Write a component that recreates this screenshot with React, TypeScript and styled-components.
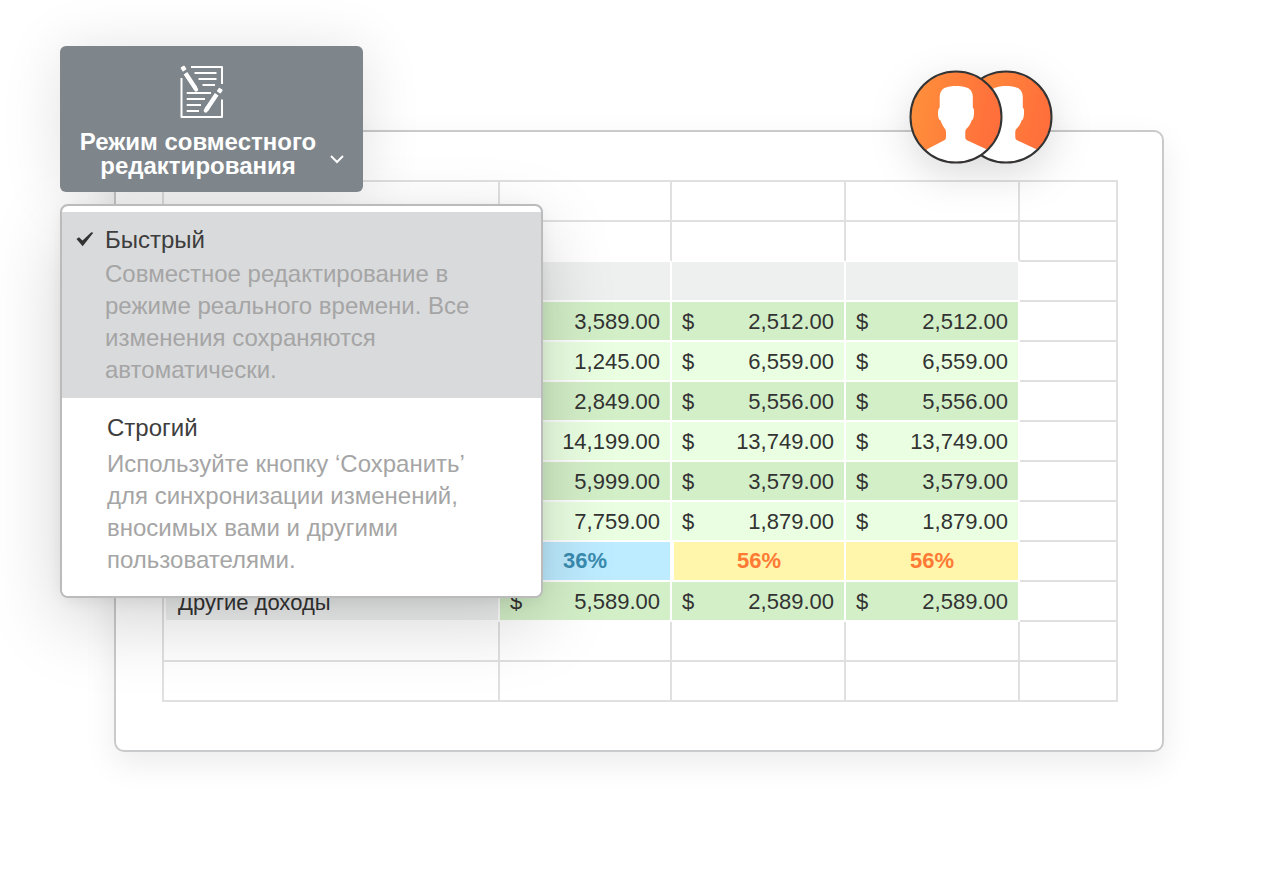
import React from "react";
import styled, { createGlobalStyle, css } from "styled-components";

const GlobalStyle = createGlobalStyle`
  *, *::before, *::after { box-sizing: border-box; }
  body {
    margin: 0;
    background: #fff;
    color: #333;
    font-family: "Liberation Sans", Arial, sans-serif;
  }
  button { font: inherit; color: inherit; cursor: pointer; }
`;

const Page = styled.main`
  position: relative;
  min-height: 100vh;
  overflow: hidden;
  padding: 130px 116px 128px 114px;
`;

const Card = styled.section`
  position: relative;
  padding: 48px 44px 48px 46px;
  border: 2px solid #c9cacb;
  border-radius: 10px;
  background: #fff;
  box-shadow: 0 12px 32px rgba(0, 0, 0, 0.08);
`;

const Sheet = styled.table`
  width: 100%;
  table-layout: fixed;
  border-collapse: separate;
  border-spacing: 0;
  border: 0 solid #e0e0e0;
  border-width: 2px 0 0 2px;
  font-size: 22px;
  line-height: 24px;
`;

const Column = styled.col<{ $width?: number }>`
  width: ${(p) => (p.$width ? `${p.$width}px` : "auto")};
`;

type Tone = "plain" | "head" | "green" | "mint" | "blue" | "yellow" | "label";

const fills: Record<Tone, string> = {
  plain: "transparent",
  head: "#eeefef",
  label: "#eeefef",
  green: "#d3efc8",
  mint: "#eaffe2",
  blue: "#bdebff",
  yellow: "#fff5ab",
};

const Cell = styled.td<{ $tone: Tone; $openBottom?: boolean }>`
  height: 40px;
  padding: 2px 10px 0;
  border: 0 solid #e0e0e0;
  border-width: 0 2px 2px 0;
  background: ${(p) => fills[p.$tone]};
  background-clip: padding-box;
  ${(p) => p.$tone !== "plain" && css`border-color: #fff;`}
  ${(p) => p.$openBottom && css`border-bottom-color: #fff;`}
`;

const LabelCell = styled(Cell)`
  padding-top: 4px;
  padding-left: 12px;
  border-left: 2px solid #fff;
`;

const PercentCell = styled(Cell)<{ $split?: boolean }>`
  padding-top: 0;
  text-align: center;
  font-weight: 700;
  color: ${(p) => (p.$tone === "blue" ? "#3a8bb0" : "#ff7a35")};
  border-left-width: ${(p) => (p.$split ? 2 : 0)}px;
`;

const Money = styled.div`
  display: flex;
  justify-content: space-between;
`;

const Avatars = styled.div`
  position: absolute;
  top: -62px;
  right: 109px;
  display: flex;
  filter: drop-shadow(0 12px 20px rgba(0, 0, 0, 0.14));
`;

const AvatarSvg = styled.svg<{ $front?: boolean }>`
  display: block;
  width: 94px;
  height: 94px;
  z-index: ${(p) => (p.$front ? 1 : 0)};
  & + & { margin-left: -44px; }
`;

const ModePicker = styled.div`
  position: absolute;
  top: 46px;
  left: 60px;
  width: 483px;
  display: flex;
  flex-direction: column;
  align-items: flex-start;
  gap: 12px;
  isolation: isolate;
`;

/* The shadow sits on a layer below both panels, so neither one darkens the other. */
const castShadow = (shadow: string) => css`
  position: relative;
  &::before {
    content: "";
    position: absolute;
    inset: 0;
    z-index: -1;
    border-radius: 8px;
    box-shadow: ${shadow};
  }
`;

const ModeButton = styled.button`
  ${castShadow("0 4px 60px rgba(0, 0, 0, 0.12)")}
  display: flex;
  align-items: flex-end;
  gap: 12px;
  padding: 18px 18px 14px 19px;
  border: 0;
  border-radius: 6px;
  background: #7e858b;
  color: #fff;
`;

const ModeCaption = styled.span`
  display: flex;
  flex-direction: column;
  align-items: center;
  gap: 11px;
  width: 238px;
  font-size: 24px;
  font-weight: 700;
  line-height: 24px;
`;

const Chevron = styled.svg`
  width: 16px;
  height: 10px;
  margin-bottom: 14px;
`;

const Menu = styled.div`
  ${castShadow("0 24px 76px rgba(0, 0, 0, 0.18), 0 4px 16px rgba(0, 0, 0, 0.08)")}
  width: 100%;
  padding-top: 6px;
  border: 2px solid #bbb;
  border-radius: 8px;
  background: #fff;
`;

const Option = styled.button<{ $active?: boolean }>`
  display: grid;
  grid-template-columns: ${(p) => (p.$active ? 17 : 19)}px 1fr;
  column-gap: 12px;
  width: 100%;
  padding: ${(p) => (p.$active ? "12px 44px 12px 14px" : "14px 44px 20px 14px")};
  border: 0;
  border-radius: ${(p) => (p.$active ? 0 : "0 0 6px 6px")};
  background: ${(p) => (p.$active ? "#d9dadc" : "#fff")};
  text-align: left;
  font-size: 24px;
  line-height: 32px;
`;

const Tick = styled.svg`
  width: 18px;
  height: 15px;
  margin-top: 8px;
`;

const OptionText = styled.span<{ $gap: number }>`
  grid-column: 2;
  display: flex;
  flex-direction: column;
  gap: ${(p) => p.$gap}px;
`;

const OptionTitle = styled.span`
  color: #3d3d3d;
`;

const OptionHint = styled.span`
  color: #a5a5a5;
`;

function Avatar({ id, front }: { id: string; front?: boolean }) {
  return (
    <AvatarSvg $front={front} viewBox="0 0 94 94" aria-hidden="true">
      <defs>
        <linearGradient id={`${id}-fill`} x1="0" x2="1" y1="0.4" y2="0.6">
          <stop offset="0" stopColor="#ff8f3b" />
          <stop offset="0.8" stopColor="#ff733b" />
          <stop offset="1" stopColor="#ff6e3b" />
        </linearGradient>
        <clipPath id={`${id}-clip`}>
          <circle cx="47" cy="47" r="45" />
        </clipPath>
      </defs>
      <circle cx="47" cy="47" r="45" fill={`url(#${id}-fill)`} />
      <path
        clipPath={`url(#${id}-clip)`}
        fill="#fff"
        d="M47 16C41 16 35.500 17 33 20C31 22.500 30.700 25 30.700 28V37.500C29.300 38.500 29 40 29 44C29.200 48 29.800 49.500 31.600 50.500C32.800 54.500 34.500 57 36.500 59.500C37.200 61.500 37 64 37 67.500C36.700 69 36.300 69.800 35.300 70.300L18 79.300V94H78V79.500L58 70.300C57 69.800 56.500 69 56.300 67.500C56.300 64 56 61.500 56.800 59.500C59.500 57 61.500 54.500 62.600 50.500C64 49.500 64.700 48 65 44C65.200 40 65 38.500 63.800 37.500V28C63.800 25 63.500 22.500 61.500 20C59 17 53 16 47 16Z"
      />
      <circle cx="47" cy="47" r="45.500" fill="none" stroke="#333" strokeWidth="2" />
    </AvatarSvg>
  );
}

function CoEditIcon() {
  return (
    <svg width="52" height="55" viewBox="0 0 52 55" fill="none" stroke="#fff" aria-hidden="true">
      <path strokeWidth="2" strokeLinejoin="round" d="M19 3H50V20M50 35.500V53H9.500V14" />
      <path
        strokeWidth="2"
        d="M22.500 9H44.500M26.500 15H44.500M30.500 21H43M14.700 29H39M14.700 35H33M14.700 41H29M14.700 47H27"
      />
      <path strokeWidth="4.400" d="M13.500 9.200L23.500 24.400M44.700 30.300L34.500 45.500" />
      <path strokeWidth="4" strokeLinecap="round" d="M22.500 23L24.200 25.600M35.500 44L33.700 46.600" />
      <path
        fill="#fff"
        strokeWidth="1.800"
        strokeLinejoin="round"
        d="M9.600 4.100L11.900 2.600L13.400 5L11.100 6.500ZM47.400 24.700L49.700 26.200L48.200 28.600L45.900 27.100Z"
      />
    </svg>
  );
}

type RowData = { tone: Tone; values: string[]; label?: string };

const rows: RowData[] = [
  { tone: "plain", values: ["", "", ""] },
  { tone: "plain", values: ["", "", ""] },
  { tone: "head", values: ["", "", ""] },
  { tone: "green", values: ["3,589.00", "2,512.00", "2,512.00"] },
  { tone: "mint", values: ["1,245.00", "6,559.00", "6,559.00"] },
  { tone: "green", values: ["2,849.00", "5,556.00", "5,556.00"] },
  { tone: "mint", values: ["14,199.00", "13,749.00", "13,749.00"] },
  { tone: "green", values: ["5,999.00", "3,579.00", "3,579.00"] },
  { tone: "mint", values: ["7,759.00", "1,879.00", "1,879.00"] },
  { tone: "yellow", values: ["36%", "56%", "56%"] },
  { tone: "green", values: ["5,589.00", "2,589.00", "2,589.00"], label: "Другие доходы" },
  { tone: "plain", values: ["", "", ""] },
  { tone: "plain", values: ["", "", ""] },
];

function SheetRow({ row, openBottom }: { row: RowData; openBottom: boolean }) {
  const percent = row.tone === "yellow";
  return (
    <tr>
      {row.tone === "plain" ? (
        <Cell $tone="plain" $openBottom={openBottom} />
      ) : (
        <LabelCell $tone="label">{row.label}</LabelCell>
      )}
      {row.values.map((value, i) =>
        percent ? (
          <PercentCell key={i} $tone={i === 0 ? "blue" : "yellow"} $split={i === 1}>
            {value}
          </PercentCell>
        ) : (
          <Cell key={i} $tone={row.tone} $openBottom={openBottom}>
            {value && (
              <Money>
                <span>$</span>
                <span>{value}</span>
              </Money>
            )}
          </Cell>
        )
      )}
      <Cell $tone="plain" />
    </tr>
  );
}

export default function App() {
  return (
    <>
      <GlobalStyle />
      <Page>
        <Card>
          <Sheet>
            <colgroup>
              <Column />
              <Column $width={172} />
              <Column $width={174} />
              <Column $width={174} />
              <Column $width={98} />
            </colgroup>
            <tbody>
              {rows.map((row, i) => (
                <SheetRow key={i} row={row} openBottom={rows[i + 1]?.tone === "head"} />
              ))}
            </tbody>
          </Sheet>
          <Avatars>
            <Avatar id="first" front />
            <Avatar id="second" />
          </Avatars>
        </Card>

        <ModePicker>
          <ModeButton type="button" aria-haspopup="menu" aria-expanded="true">
            <ModeCaption>
              <CoEditIcon />
              <span>Режим совместного редактирования</span>
            </ModeCaption>
            <Chevron viewBox="0 0 16 10" fill="none" stroke="#fff" strokeWidth="2" aria-hidden="true">
              <path d="M2 2L8 8L14 2" />
            </Chevron>
          </ModeButton>
          <Menu role="menu">
            <Option type="button" role="menuitemradio" aria-checked="true" $active>
              <Tick viewBox="0 0 18 15" fill="#333" aria-hidden="true">
                <path d="M0.500 7L3 5.200L6.500 8.400L15.300 0.300L17.300 0.800L6.700 14.200Z" />
              </Tick>
              <OptionText $gap={2}>
                <OptionTitle>Быстрый</OptionTitle>
                <OptionHint>
                  Совместное редактирование в режиме реального времени. Все изменения сохраняются автоматически.
                </OptionHint>
              </OptionText>
            </Option>
            <Option type="button" role="menuitemradio" aria-checked="false">
              <OptionText $gap={4}>
                <OptionTitle>Строгий</OptionTitle>
                <OptionHint>
                  Используйте кнопку ‘Сохранить’ для синхронизации изменений, вносимых вами и другими пользователями.
                </OptionHint>
              </OptionText>
            </Option>
          </Menu>
        </ModePicker>
      </Page>
    </>
  );
}
